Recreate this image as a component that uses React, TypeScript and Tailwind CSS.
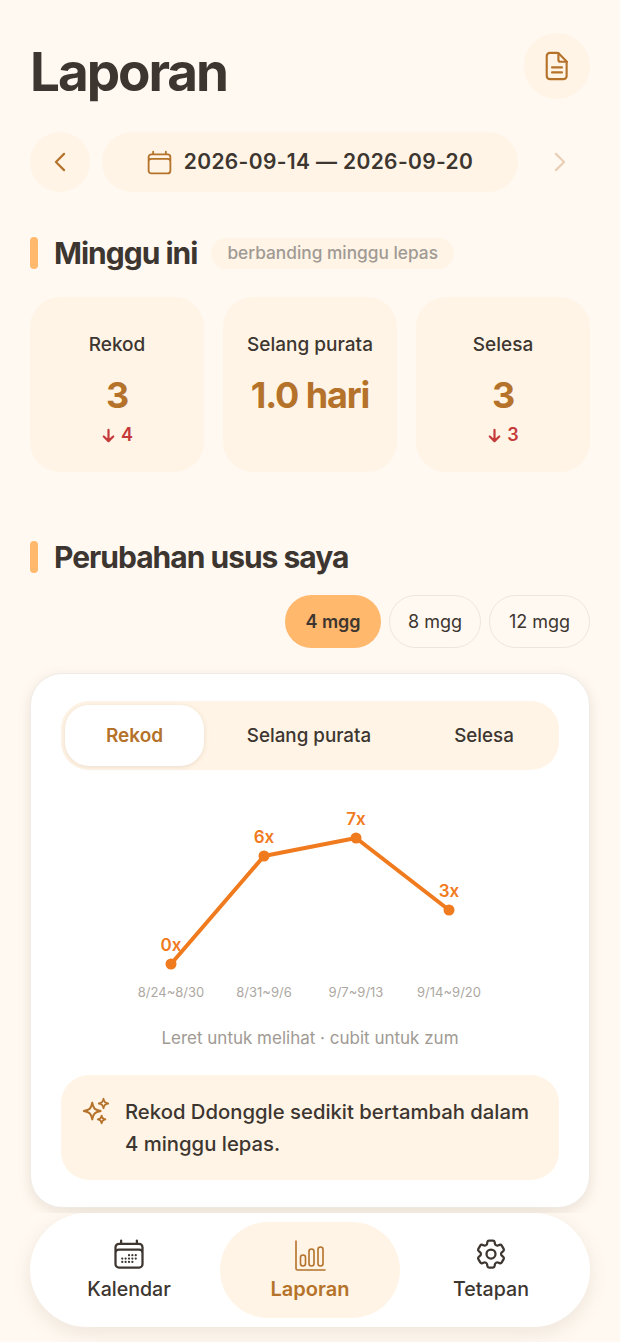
import { HiArrowDown, HiOutlineCalendar, HiOutlineCalendarDays, HiOutlineChevronLeft, HiOutlineChevronRight, HiOutlineCog6Tooth, HiOutlineSparkles } from 'react-icons/hi2'

const stats = [
    { label: 'Rekod', value: '3', delta: '4' },
    { label: 'Selang purata', value: '1.0 hari', delta: '' },
    { label: 'Selesa', value: '3', delta: '3' },
]

const points = [
    { x: 110, y: 179, label: '0x', week: '8/24~8/30' },
    { x: 203, y: 71, label: '6x', week: '8/31~9/6' },
    { x: 295, y: 53, label: '7x', week: '9/7~9/13' },
    { x: 388, y: 125, label: '3x', week: '9/14~9/20' },
]

const SectionTitle = ({ title }: { title: string }) => (
    <div className="flex items-center gap-4">
        <i className="h-8 w-2 rounded-full bg-[#FFB86C]"></i>
        <h2 className="text-[30px] leading-8 font-bold tracking-[-1px] text-[#3D3630]">{title}</h2>
    </div>
)

const DocIcon = () => (
    <svg viewBox="0 0 24 24" className="h-[34px] w-[34px]" fill="none" stroke="#B5722A" strokeWidth="1.5" strokeLinecap="round" strokeLinejoin="round">
        <path d="M7 2.75h5.2c.4 0 .8.2 1.1.5l5 5c.3.3.5.7.5 1.1V19a2.25 2.25 0 0 1-2.25 2.25H7A2.25 2.25 0 0 1 4.75 19V5A2.25 2.25 0 0 1 7 2.75z" />
        <path d="M13 3v4.5A1.5 1.5 0 0 0 14.5 9H19" />
        <path d="M8.5 13h7M8.5 16.5h7" />
    </svg>
)

const BarsIcon = () => (
    <svg viewBox="0 0 32 32" className="h-8 w-8" fill="none" stroke="#B5722A" strokeWidth="1.6" strokeLinecap="round" strokeLinejoin="round">
        <path d="M2 1v27.5a1.5 1.5 0 0 0 1.5 1.5H31" />
        <rect x="6.5" y="15" width="5" height="11" rx="2.5" />
        <rect x="15" y="9" width="5" height="17" rx="2.5" />
        <rect x="24" y="7" width="5" height="19" rx="2.5" />
    </svg>
)

export default function App() {
    return (
        <div className="relative h-[1342px] w-full overflow-hidden bg-[#FFF9F2] font-[Inter,sans-serif] text-[#3D3630]">
            <div className="px-[30px] pt-[33px]">
                {/* header */}
                <div className="flex items-start justify-between">
                    <h1 className="mt-[5px] text-[53px] leading-[68px] font-bold tracking-[-2.05px]">Laporan</h1>
                    <button className="flex h-[66px] w-[66px] items-center justify-center rounded-full bg-[#FFF4E6]">
                        <DocIcon />
                    </button>
                </div>

                {/* week picker */}
                <div className="mt-[26px] flex items-center gap-3">
                    <button className="flex h-[60px] w-[60px] items-center justify-center rounded-full bg-[#FFF4E6]">
                        <HiOutlineChevronLeft className="h-[26px] w-[26px] stroke-2 text-[#B5722A]" />
                    </button>
                    <div className="flex h-[60px] flex-1 items-center justify-center gap-[10px] rounded-full bg-[#FFF4E6] pr-[2px]">
                        <HiOutlineCalendar className="h-[29px] w-[29px] text-[#B5722A]" />
                        <span className="text-[21px] font-semibold tracking-[0.35px]">2026-09-14 — 2026-09-20</span>
                    </div>
                    <button className="flex h-[60px] w-[60px] items-center justify-center rounded-full">
                        <HiOutlineChevronRight className="h-[26px] w-[26px] stroke-2 text-[#B5722A] opacity-30" />
                    </button>
                </div>

                {/* this week */}
                <div className="mt-[45px] flex items-center">
                    <SectionTitle title="Minggu ini" />
                    <span className="ml-[14px] flex h-[31px] items-center rounded-full bg-[#FFF4E6] px-4 text-[17.3px] font-medium text-[#A09A94]">
                        berbanding minggu lepas
                    </span>
                </div>
                <div className="mt-[28px] grid grid-cols-3 gap-[19px]">
                    {stats.map((s) => (
                        <div key={s.label} className="flex h-[175px] flex-col items-center rounded-[30px] bg-[#FFF4E6] pt-[36px]">
                            <span className="text-[19px] leading-6 font-medium">{s.label}</span>
                            <span className="mt-[18px] text-[36px] leading-[40px] font-bold tracking-[-1.1px] text-[#B5722A]">{s.value}</span>
                            {s.delta && (
                                <span className="mt-[9px] flex items-center gap-[5px] text-[18px] leading-[22px] font-semibold text-[#C53A3A]">
                                    <HiArrowDown className="h-[15px] w-[15px] stroke-2" />
                                    {s.delta}
                                </span>
                            )}
                        </div>
                    ))}
                </div>

                {/* gut changes */}
                <div className="mt-[69px]">
                    <SectionTitle title="Perubahan usus saya" />
                </div>
                <div className="mt-[22px] flex justify-end gap-2">
                    <span className="flex h-[53px] w-[96px] items-center justify-center rounded-full bg-[#FFB86C] text-[18px] font-semibold">4 mgg</span>
                    <span className="flex h-[53px] w-[92px] items-center justify-center rounded-full border-[1.5px] border-[#EBE6E0] text-[18px]">8 mgg</span>
                    <span className="flex h-[53px] w-[101px] items-center justify-center rounded-full border-[1.5px] border-[#EBE6E0] text-[18px]">12 mgg</span>
                </div>

                <div className="mt-[25px] h-[535px] rounded-[32px] border border-[#EFEBE6] bg-white px-[30px] pt-[27px] shadow-[0_4px_14px_rgba(120,90,50,0.14)]">
                    {/* metric tabs */}
                    <div className="flex h-[69px] items-center rounded-[28px] bg-[#FFF4E6] p-1">
                        <span className="flex h-[61px] w-[139px] items-center justify-center rounded-[24px] bg-white pt-[2px] text-[19px] font-semibold text-[#B5722A] shadow-[0_1px_5px_rgba(120,90,50,0.15)]">Rekod</span>
                        <span className="flex w-[210px] justify-center pt-[2px] text-[18.8px] font-medium">Selang purata</span>
                        <span className="flex w-[140px] justify-center pt-[2px] text-[18.8px] font-medium">Selesa</span>
                    </div>

                    {/* chart */}
                    <svg viewBox="0 0 497 215" className="mt-[15px] h-[215px] w-[497px] overflow-visible">
                        <polyline points={points.map((p) => `${p.x},${p.y}`).join(' ')} fill="none" stroke="#F07A1E" strokeWidth="4" strokeLinejoin="round" />
                        {points.map((p) => (
                            <g key={p.week}>
                                <circle cx={p.x} cy={p.y} r="5.5" fill="#F07A1E" />
                                <text x={p.x} y={p.y - 13} textAnchor="middle" fontSize="17" fontWeight="600" fill="#F07A1E">{p.label}</text>
                                <text x={p.x} y="212" textAnchor="middle" fontSize="13" fill="#ADA8A2">{p.week}</text>
                            </g>
                        ))}
                    </svg>
                    <p className="mt-[26px] text-center text-[17px] leading-6 text-[#A09A94]">Leret untuk melihat · cubit untuk zum</p>

                    {/* insight */}
                    <div className="mt-[25px] flex h-[105px] items-start gap-[14px] rounded-[28px] bg-[#FFF4E6] px-5 pt-[21px]">
                        <HiOutlineSparkles className="h-[30px] w-[30px] shrink-0 text-[#B5722A]" />
                        <p className="text-[20.3px] leading-[32px] font-medium">Rekod Ddonggle sedikit bertambah dalam 4 minggu lepas.</p>
                    </div>
                </div>
            </div>

            {/* bottom nav */}
            <div className="absolute inset-x-0 top-[1213px] bottom-0 bg-[#FFF9F2] px-[30px]">
                <nav className="flex h-[114px] items-center rounded-full bg-white px-[10px] shadow-[0_6px_20px_rgba(120,90,50,0.12)]">
                    <div className="flex flex-1 flex-col items-center gap-[5px] pr-[2px] pb-[3px]">
                        <HiOutlineCalendarDays className="h-9 w-9" />
                        <span className="text-[19.6px] leading-6 font-medium">Kalendar</span>
                    </div>
                    <div className="flex h-[96px] w-[180px] flex-col items-center justify-center gap-[5px] rounded-full bg-[#FFF4E6]">
                        <BarsIcon />
                        <span className="text-[20px] leading-6 font-semibold text-[#B5722A]">Laporan</span>
                    </div>
                    <div className="flex flex-1 flex-col items-center gap-[5px] pl-[2px] pb-[3px]">
                        <HiOutlineCog6Tooth className="h-9 w-9" />
                        <span className="text-[19.6px] leading-6 font-medium">Tetapan</span>
                    </div>
                </nav>
            </div>
        </div>
    )
}
